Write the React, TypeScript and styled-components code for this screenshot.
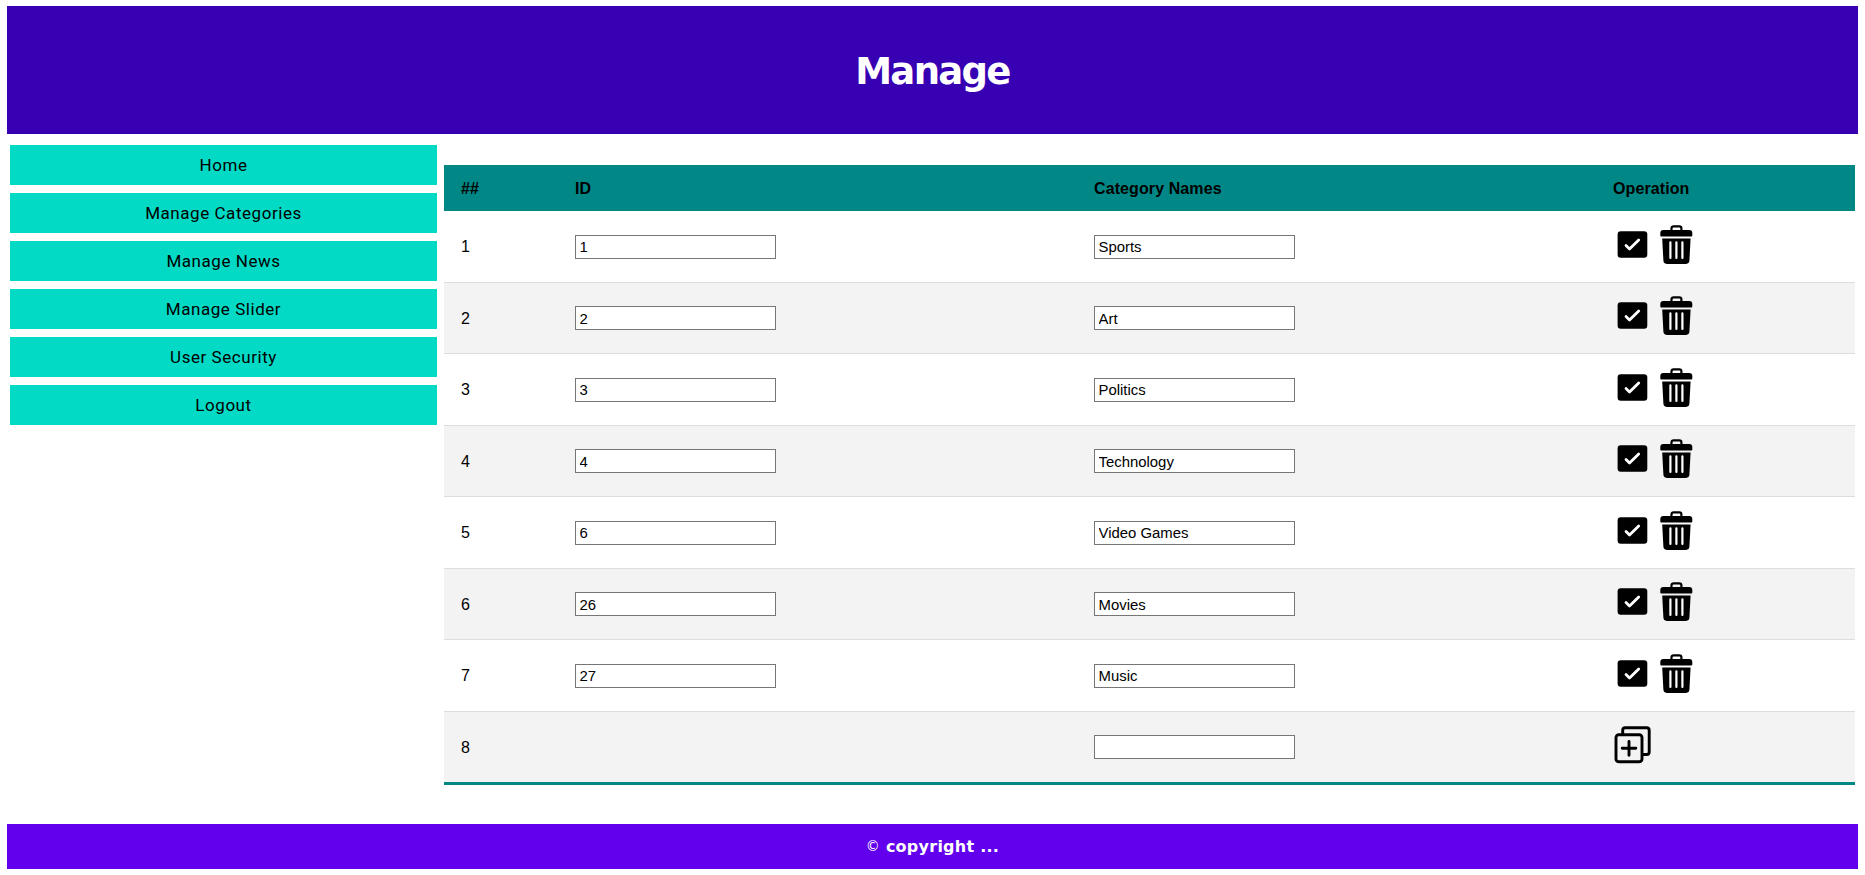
import React from "react";
import styled, { createGlobalStyle } from "styled-components";

const Global = createGlobalStyle`
  body { margin: 0; background: #fff; color: #000; font-family: "Liberation Sans", Arial, sans-serif; }
  *, *::before, *::after { box-sizing: border-box; }
`;

const Page = styled.div`
  display: flex;
  flex-direction: column;
  width: 1851px;
  margin: 6px 7px;
`;

const Header = styled.header`
  display: flex;
  align-items: center;
  justify-content: center;
  height: 128px;
  padding-top: 3px;
  background: #3700b3;
`;

const Title = styled.h1`
  margin: 0;
  color: #fff;
  font: bold 37px/44px "DejaVu Sans", sans-serif;
  letter-spacing: -1.7px;
`;

const Body = styled.div`
  display: flex;
  align-items: flex-start;
  height: 690px;
`;

const Sidebar = styled.nav`
  display: flex;
  flex-direction: column;
  gap: 8px;
  width: 427px;
  margin: 11px 7px 0 3px;
`;

const NavItem = styled.a`
  height: 40px;
  background: #03dac6;
  color: #000;
  text-align: center;
  font: 17px/40px Roboto, "Liberation Sans", sans-serif;
  letter-spacing: 0.55px;
`;

const Table = styled.div`
  width: 1411px;
  margin-top: 31px;
  border-bottom: 3px solid #018786;
`;

const columns = "114px 519px 519px 1fr";

const HeadRow = styled.div`
  display: grid;
  grid-template-columns: ${columns};
  align-items: center;
  height: 46px;
  padding: 2px 0 0 17px;
  background: #018786;
  font-size: 16px;
  font-weight: bold;
  letter-spacing: 0.1px;
`;

const Row = styled.div<{ $height: number; $last?: boolean }>`
  display: grid;
  grid-template-columns: ${columns};
  height: ${(p) => p.$height}px;
  padding-left: 17px;
  border-bottom: ${(p) => (p.$last ? "0" : "1px solid #ddd")};
  font-size: 16px;
  &:nth-child(odd) { background: #f3f3f3; }
`;

const Cell = styled.div`
  padding-top: 27px;
  line-height: 18px;
`;

const FieldCell = styled.div`
  padding-top: 24px;
  ${Row}:nth-child(odd) & { padding-top: 23px; }
`;

const Field = styled.input`
  display: block;
  width: 201px;
  height: 24px;
  padding: 1px 3.5px;
  border: 1px solid #767676;
  background: #fff;
  color: #000;
  font: 14.9px "Liberation Sans", Arial, sans-serif;
  ${Row}:nth-child(odd) & { padding-top: 3px; }
`;

const Actions = styled.div`
  display: flex;
  align-items: flex-start;
  gap: 3px;
  margin-left: -1px;
  padding-top: 14px;
  ${Row}:nth-child(odd) & { padding-top: 13px; }
`;

const CheckIcon = () => (
  <svg width="40" height="40" viewBox="0 0 40 40">
    <rect x="5.6" y="6.3" width="29.7" height="26.5" rx="3.2" />
    <path d="M14 20.6l3.5 3.5 9.2-9" fill="none" stroke="#fff" strokeWidth="2.8" strokeLinecap="round" strokeLinejoin="round" />
  </svg>
);

const TrashIcon = () => (
  <svg width="40" height="40" viewBox="0 0 40 40">
    <path d="M16.5 6V3.3a2 2 0 0 1 2-2h5.9a2 2 0 0 1 2 2V6" fill="none" stroke="#000" strokeWidth="2.2" />
    <path d="M8.3 5h26a3 3 0 0 1 3 3v2.5a1 1 0 0 1-1 1h-30a1 1 0 0 1-1-1V8a3 3 0 0 1 3-3z" />
    <path d="M7.2 13.6h28.4l-1.2 22a3.6 3.6 0 0 1-3.4 3.4H11.8a3.6 3.6 0 0 1-3.4-3.4z" />
    <path d="M15.4 17.3v15.7M21.4 17.3v15.7M27.4 17.3v15.7" stroke="#fff" strokeWidth="2.2" strokeLinecap="round" />
  </svg>
);

const AddIcon = () => (
  <svg width="40" height="40" viewBox="0 0 40 40" fill="none" stroke="#000" strokeWidth="2.9" strokeLinecap="round" strokeLinejoin="round">
    <rect x="4" y="9.7" width="26" height="27" rx="2.8" />
    <path d="M10.7 8.5V5.3a2.5 2.5 0 0 1 2.5-2.5h21.5a2.5 2.5 0 0 1 2.5 2.5v21.7a2.5 2.5 0 0 1-2.5 2.5H31" />
    <path d="M17 16.5v13.7M10.2 23.3h13.6" />
  </svg>
);

const Footer = styled.footer`
  height: 45px;
  background: #6200ee;
  color: #fff;
  text-align: center;
  font: bold 16px/45px "DejaVu Sans", sans-serif;
  letter-spacing: 0.25px;
`;

const Mark = styled.span`
  font-size: 14px;
  font-weight: normal;
  vertical-align: 1px;
`;

const links = ["Home", "Manage Categories", "Manage News", "Manage Slider", "User Security", "Logout"];

const categories = [
  { id: "1", name: "Sports", height: 72 },
  { id: "2", name: "Art", height: 71 },
  { id: "3", name: "Politics", height: 72 },
  { id: "4", name: "Technology", height: 71 },
  { id: "6", name: "Video Games", height: 72 },
  { id: "26", name: "Movies", height: 71 },
  { id: "27", name: "Music", height: 72 },
];

export default function App() {
  return (
    <Page>
      <Global />
      <Header><Title>Manage</Title></Header>
      <Body>
        <Sidebar>
          {links.map((label) => <NavItem key={label}>{label}</NavItem>)}
        </Sidebar>
        <Table>
          <HeadRow>
            <span>##</span><span>ID</span><span>Category Names</span><span>Operation</span>
          </HeadRow>
          {categories.map((c, i) => (
            <Row key={c.id} $height={c.height}>
              <Cell>{i + 1}</Cell>
              <FieldCell><Field defaultValue={c.id} /></FieldCell>
              <FieldCell><Field defaultValue={c.name} /></FieldCell>
              <Actions><CheckIcon /><TrashIcon /></Actions>
            </Row>
          ))}
          <Row $height={70} $last>
            <Cell>8</Cell>
            <span />
            <FieldCell><Field /></FieldCell>
            <Actions><AddIcon /></Actions>
          </Row>
        </Table>
      </Body>
      <Footer><Mark>©</Mark> copyright ...</Footer>
    </Page>
  );
}
